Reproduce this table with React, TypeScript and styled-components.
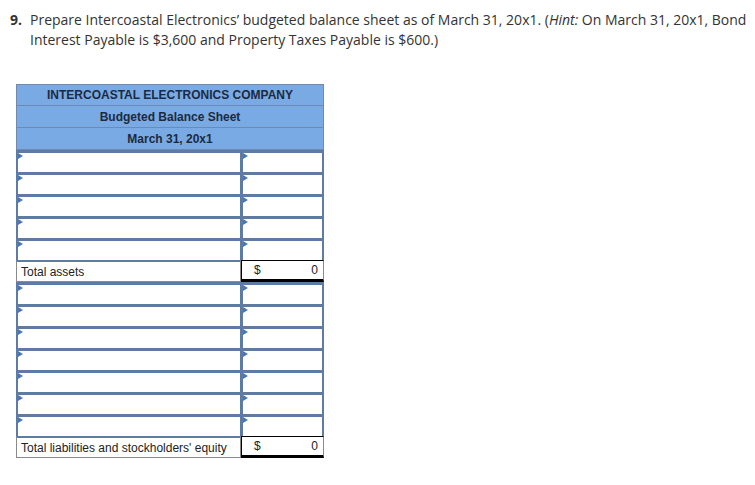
import styled, { createGlobalStyle } from "styled-components";

const GlobalStyle = createGlobalStyle`
    body {
        margin: 0;
        background: #ffffff;
        font-family: "Open Sans", "Liberation Sans", sans-serif;
    }
`;

const Page = styled.div`
    padding: 10px 0 0 10px;
`;

const Question = styled.div`
    display: flex;
    font-size: 14px;
    line-height: 20px;
    color: #333333;
`;

const Num = styled.span`
    font-weight: 700;
    width: 20px;
    flex-shrink: 0;
`;

const Table = styled.div`
    margin: 34px 0 0 6px;
    width: 308px;
    font-family: "Liberation Sans", Arial, sans-serif;
    font-size: 12px;
`;

const HeaderRow = styled.div<{ first?: boolean }>`
    height: 22px;
    box-sizing: border-box;
    display: flex;
    align-items: center;
    justify-content: center;
    background: #7aaae4;
    border: 1px solid #6f8aae;
    border-top: ${(p) => (p.first ? "1px solid #6f8aae" : "none")};
    color: #1c2a40;
    font-weight: 700;
`;

const Row = styled.div`
    display: grid;
    grid-template-columns: 225px 83px;
    height: 22px;
`;

const InputCell = styled.div<{ right?: boolean }>`
    position: relative;
    box-sizing: border-box;
    background: #ffffff;
    border-top: 3px solid #5e7ca3;
    border-left: 2px solid #5e7ca3;
    border-right: ${(p) => (p.right ? "2px" : "1px")} solid #5e7ca3;
    &::before {
        content: "";
        position: absolute;
        left: 0;
        top: 0;
        border-top: 3px solid transparent;
        border-bottom: 3px solid transparent;
        border-left: 5px solid #4a78b5;
    }
`;

const TotalLabel = styled.div`
    box-sizing: border-box;
    border: 1px solid #8a8a8a;
    border-top: 2px solid #5e7ca3;
    padding-left: 4px;
    display: flex;
    align-items: center;
    color: #222222;
`;

const TotalValue = styled.div`
    box-sizing: border-box;
    border-top: 1px solid #000000;
    border-left: 1px solid #000000;
    border-right: 1px solid #8a8a8a;
    border-bottom: 3px solid #000000;
    display: flex;
    align-items: center;
    justify-content: space-between;
    padding: 0 5px 0 12px;
    color: #222222;
`;

const InputRows = ({ count }: { count: number }) => (
    <>
        {Array.from({ length: count }).map((_, i) => (
            <Row key={i}>
                <InputCell />
                <InputCell right />
            </Row>
        ))}
    </>
);

const App = () => {
    return (
        <Page>
            <GlobalStyle />
            <Question>
                <Num>9.</Num>
                <div>
                    Prepare Intercoastal Electronics’ budgeted balance sheet as of March 31, 20x1. (<i>Hint:</i> On March 31, 20x1, Bond Interest Payable is $3,600 and Property Taxes Payable is $600.)
                </div>
            </Question>
            <Table>
                <HeaderRow first>INTERCOASTAL ELECTRONICS COMPANY</HeaderRow>
                <HeaderRow>Budgeted Balance Sheet</HeaderRow>
                <HeaderRow>March 31, 20x1</HeaderRow>
                <InputRows count={5} />
                <Row>
                    <TotalLabel>Total assets</TotalLabel>
                    <TotalValue><span>$</span><span>0</span></TotalValue>
                </Row>
                <InputRows count={7} />
                <Row>
                    <TotalLabel>Total liabilities and stockholders' equity</TotalLabel>
                    <TotalValue><span>$</span><span>0</span></TotalValue>
                </Row>
            </Table>
        </Page>
    );
};

export default App;
